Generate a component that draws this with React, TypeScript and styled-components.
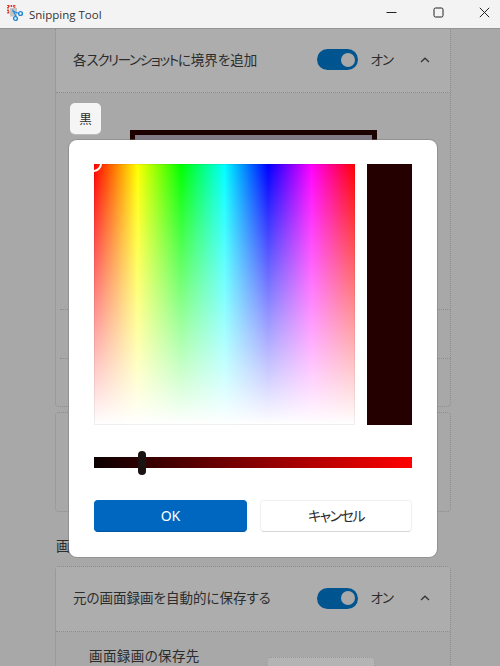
import React from 'react'
import styled, { createGlobalStyle } from 'styled-components'

const GlobalStyle = createGlobalStyle`
  html, body {
    margin: 0;
    padding: 0;
    background: #a8a8a8;
  }
  * {
    box-sizing: border-box;
  }
`

const Page = styled.div`
  position: relative;
  width: 500px;
  height: 666px;
  overflow: hidden;
  display: flex;
  flex-direction: column;
  background: #a8a8a8;
  color: #2c2c2c;
  font-family: "Noto Sans CJK JP", "Noto Sans", sans-serif;
  font-feature-settings: "palt";
`

const TitleBar = styled.div`
  flex: none;
  height: 29px;
  display: flex;
  align-items: center;
  padding-left: 6px;
  background: #f3f3f3;
  border-bottom: 1px solid #959595;
  position: relative;
  z-index: 2;
`

const AppName = styled.span`
  margin-left: 5px;
  font-family: "Open Sans", sans-serif;
  font-size: 11.5px;
  color: #333;
`

const WindowButtons = styled.div`
  margin: 0 -8px 3px auto;
  display: flex;
  align-items: center;
`

const WindowButton = styled.div`
  width: 46.5px;
  height: 25px;
  display: flex;
  align-items: center;
  justify-content: center;
`

const Content = styled.div`
  flex: 1;
  padding: 0 49px 0 55px;
  overflow: hidden;
`

const Card = styled.section<{ $top?: boolean }>`
  border: 1px dotted #8d8d8d;
  border-top-style: ${p => (p.$top ? 'none' : 'dotted')};
  border-radius: ${p => (p.$top ? '0 0 4px 4px' : '4px')};
  margin-bottom: 5px;
`

const CardHeader = styled.div<{ $height: number }>`
  height: ${p => p.$height}px;
  display: flex;
  align-items: center;
  padding: 0 20px 2px 17px;
  background: #adadad;
  border-bottom: 1px dotted #8d8d8d;
`

const Label = styled.span`
  margin-top: -2px;
  font-size: 13.5px;
  white-space: nowrap;
`

const Kana = styled.span`
  letter-spacing: -1.35px;
`

const ToggleGroup = styled.div`
  margin-left: auto;
  display: flex;
  align-items: center;
`

const Toggle = styled.div`
  width: 41px;
  height: 21px;
  border-radius: 11px;
  background: #00548f;
  display: flex;
  align-items: center;
  justify-content: flex-end;
  padding-right: 3px;
`

const Knob = styled.div`
  width: 14px;
  height: 14px;
  border-radius: 50%;
  background: #a9a9a9;
`

const ToggleText = styled.span`
  margin: -2px 27px 0 13px;
  font-size: 13.5px;
  letter-spacing: -1px;
`

const ExpandBody = styled.div`
  height: 216px;
  padding: 10px 0 0 14px;
`

const ColorChip = styled.div`
  width: 31px;
  height: 31px;
  display: flex;
  align-items: center;
  justify-content: center;
  border-radius: 5px;
  background: #f5f5f5;
  box-shadow: 0 1px 0 #bcbcbc;
  font-size: 12.5px;
`

const Preview = styled.div`
  width: 247px;
  height: 150px;
  margin: -4px 0 0 60px;
  border: 5px solid #1c0000;
  background: #7f7a85;
`

const SubRow = styled.div<{ $height: number }>`
  height: ${p => p.$height}px;
  margin-left: 4px;
  border-top: 1px dotted #8d8d8d;
`

const EmptyCard = styled(Card)`
  height: 100px;
`

const SectionTitle = styled.div`
  margin: 24px 0 11px;
  padding-left: 1px;
  height: 19px;
  font-size: 14px;
  line-height: 19px;
`

const SaveRow = styled.div`
  height: 70px;
  display: flex;
  padding: 12px 0 0 33px;
`

const SaveLabel = styled(Label)`
  margin-top: 0;
  line-height: 22px;
  letter-spacing: 0.4px;
`

const SaveButton = styled.div`
  width: 108px;
  height: 32px;
  margin: 13px 75px 0 auto;
  border-radius: 4px;
  background: #b4b4b4;
  border: 1px dotted #999;
`

const Dialog = styled.div`
  position: absolute;
  left: 69px;
  top: 140px;
  width: 368px;
  height: 417px;
  padding: 24px 25px 0;
  border-radius: 8px;
  background: #fff;
  box-shadow: 0 0 0 1px rgba(120, 120, 120, 0.45);
  z-index: 3;
`

const PickerRow = styled.div`
  display: flex;
  justify-content: space-between;
`

const Spectrum = styled.div`
  position: relative;
  width: 261px;
  height: 261px;
  overflow: hidden;
  background:
    linear-gradient(to bottom, rgba(255, 255, 255, 0), #fff),
    linear-gradient(to right, #f00, #ff0, #0f0, #0ff, #00f, #f0f, #f00);
  box-shadow: inset 0 0 0 1px rgba(0, 0, 0, 0.06);
`

const SpectrumHandle = styled.div`
  position: absolute;
  left: -9px;
  top: -9px;
  width: 17px;
  height: 17px;
  border-radius: 50%;
  border: 2px solid #fff;
`

const ValueStrip = styled.div`
  width: 45px;
  height: 261px;
  background: #240000;
`

const SliderTrack = styled.div`
  position: relative;
  height: 11px;
  margin-top: 32px;
  background: linear-gradient(to right, #0c0000, #f00);
`

const SliderThumb = styled.div`
  position: absolute;
  left: 43.5px;
  top: -6px;
  width: 8.5px;
  height: 24px;
  border-radius: 4px;
  background: #1b1212;
`

const Actions = styled.div`
  display: flex;
  justify-content: space-between;
  margin-top: 32px;
`

const ActionButton = styled.div<{ $primary?: boolean }>`
  width: ${p => (p.$primary ? 153 : 152)}px;
  height: 32px;
  padding-bottom: 2px;
  display: flex;
  align-items: center;
  justify-content: center;
  border-radius: 4px;
  font-size: 14px;
  background: ${p => (p.$primary ? '#0067c0' : '#fff')};
  color: ${p => (p.$primary ? '#fff' : '#2c2c2c')};
  border: 1px solid ${p => (p.$primary ? '#0067c0' : '#f0f0f0')};
  border-bottom-color: ${p => (p.$primary ? '#00569f' : '#d8d8d8')};
  letter-spacing: ${p => (p.$primary ? '0' : '-1.5px')};
  font-family: ${p => (p.$primary ? '"Noto Sans", sans-serif' : 'inherit')};
`

const Chevron = () => (
  <svg width="10" height="6" viewBox="0 0 10 6" fill="none">
    <path d="M1 5 L5 1.2 L9 5" stroke="#333" strokeWidth="1.2" />
  </svg>
)

const AppLogo = () => (
  <svg width="18" height="18" viewBox="0 0 18 18" fill="none">
    <rect x="2" y="1" width="6.5" height="6.5" stroke="#e0352b" strokeWidth="1.8" strokeDasharray="1.6 1" />
    <rect x="4" y="3" width="7" height="8.5" fill="#c4c4c4" />
    <path d="M10 11.5 L6.5 4.5 M13 8.5 L6.5 6" stroke="#1e88d8" strokeWidth="1.1" />
    <circle cx="9.5" cy="13.5" r="1.9" stroke="#1e88d8" strokeWidth="1.4" />
    <circle cx="14.5" cy="8.5" r="1.9" stroke="#1e88d8" strokeWidth="1.4" />
  </svg>
)

const App: React.FC = () => {
  return (
    <>
      <GlobalStyle />
      <Page>
        <TitleBar>
          <AppLogo />
          <AppName>Snipping Tool</AppName>
          <WindowButtons>
            <WindowButton>
              <svg width="11" height="11" viewBox="0 0 11 11" fill="none">
                <path d="M0.5 5.5 H10.5" stroke="#222" strokeWidth="1" />
              </svg>
            </WindowButton>
            <WindowButton>
              <svg width="11" height="11" viewBox="0 0 11 11" fill="none">
                <rect x="1" y="1" width="9" height="9" rx="1.5" stroke="#222" strokeWidth="1" />
              </svg>
            </WindowButton>
            <WindowButton>
              <svg width="11" height="11" viewBox="0 0 11 11" fill="none">
                <path d="M0.8 0.8 L10.2 10.2 M10.2 0.8 L0.8 10.2" stroke="#222" strokeWidth="1" />
              </svg>
            </WindowButton>
          </WindowButtons>
        </TitleBar>
        <Content>
          <Card $top>
            <CardHeader $height={64}>
              <Label>各<Kana>スクリーンショット</Kana>に境界を追加</Label>
              <ToggleGroup>
                <Toggle><Knob /></Toggle>
                <ToggleText>オン</ToggleText>
                <Chevron />
              </ToggleGroup>
            </CardHeader>
            <ExpandBody>
              <ColorChip>黒</ColorChip>
              <Preview />
            </ExpandBody>
            <SubRow $height={49} />
            <SubRow $height={48} />
          </Card>
          <EmptyCard />
          <SectionTitle>画面録画</SectionTitle>
          <Card>
            <CardHeader $height={65}>
              <Label>元の画面録画を自動的に保存する</Label>
              <ToggleGroup>
                <Toggle><Knob /></Toggle>
                <ToggleText>オン</ToggleText>
                <Chevron />
              </ToggleGroup>
            </CardHeader>
            <SaveRow>
              <SaveLabel>画面録画の保存先</SaveLabel>
              <SaveButton />
            </SaveRow>
          </Card>
        </Content>
        <Dialog>
          <PickerRow>
            <Spectrum><SpectrumHandle /></Spectrum>
            <ValueStrip />
          </PickerRow>
          <SliderTrack><SliderThumb /></SliderTrack>
          <Actions>
            <ActionButton $primary>OK</ActionButton>
            <ActionButton>キャンセル</ActionButton>
          </Actions>
        </Dialog>
      </Page>
    </>
  )
}

export default App
